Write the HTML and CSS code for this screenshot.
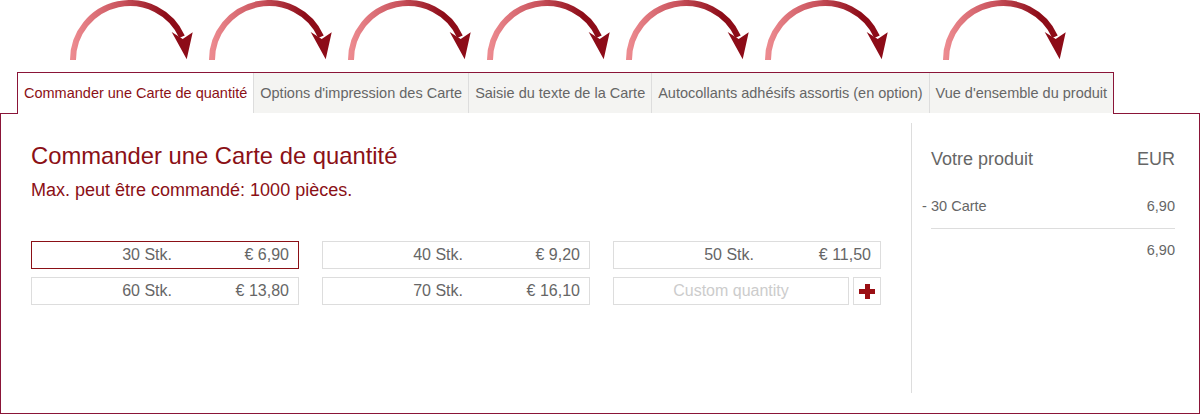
FILE: index.html
```html
<!DOCTYPE html>
<html lang="fr">
<head>
    <meta charset="UTF-8">
    <title>Commander une Carte de quantité</title>
    <link rel="stylesheet" href="styles.css">
</head>
<body>
    <!-- Step arrows -->
    <div class="steps">
        <svg class="step-arrow" viewBox="0 0 130 64"><defs><linearGradient id="arc" x1="0" y1="0" x2="1" y2="0"><stop offset="0" stop-color="#ec8a8f"/><stop offset="0.45" stop-color="#c9525c"/><stop offset="0.85" stop-color="#8d0c18"/></linearGradient></defs><path d="M3 60 A57 57 0 0 1 112 36.7" fill="none" stroke="url(#arc)" stroke-width="6"/><path d="M101.7 32 L112.7 39 L122.7 32.3 L116.7 59.3 Z" fill="#8d0c18"/></svg>
        <svg class="step-arrow" viewBox="0 0 130 64"><path d="M3 60 A57 57 0 0 1 112 36.7" fill="none" stroke="url(#arc)" stroke-width="6"/><path d="M101.7 32 L112.7 39 L122.7 32.3 L116.7 59.3 Z" fill="#8d0c18"/></svg>
        <svg class="step-arrow" viewBox="0 0 130 64"><path d="M3 60 A57 57 0 0 1 112 36.7" fill="none" stroke="url(#arc)" stroke-width="6"/><path d="M101.7 32 L112.7 39 L122.7 32.3 L116.7 59.3 Z" fill="#8d0c18"/></svg>
        <svg class="step-arrow" viewBox="0 0 130 64"><path d="M3 60 A57 57 0 0 1 112 36.7" fill="none" stroke="url(#arc)" stroke-width="6"/><path d="M101.7 32 L112.7 39 L122.7 32.3 L116.7 59.3 Z" fill="#8d0c18"/></svg>
        <svg class="step-arrow" viewBox="0 0 130 64"><path d="M3 60 A57 57 0 0 1 112 36.7" fill="none" stroke="url(#arc)" stroke-width="6"/><path d="M101.7 32 L112.7 39 L122.7 32.3 L116.7 59.3 Z" fill="#8d0c18"/></svg>
        <svg class="step-arrow" viewBox="0 0 130 64"><path d="M3 60 A57 57 0 0 1 112 36.7" fill="none" stroke="url(#arc)" stroke-width="6"/><path d="M101.7 32 L112.7 39 L122.7 32.3 L116.7 59.3 Z" fill="#8d0c18"/></svg>
        <svg class="step-arrow last" viewBox="0 0 130 64"><path d="M3 60 A57 57 0 0 1 112 36.7" fill="none" stroke="url(#arc)" stroke-width="6"/><path d="M101.7 32 L112.7 39 L122.7 32.3 L116.7 59.3 Z" fill="#8d0c18"/></svg>
    </div>

    <!-- Tabs -->
    <div class="tabs">
        <div class="tab active">Commander une Carte de quantité</div>
        <div class="tab">Options d'impression des Carte</div>
        <div class="tab">Saisie du texte de la Carte</div>
        <div class="tab">Autocollants adhésifs assortis (en option)</div>
        <div class="tab">Vue d'ensemble du produit</div>
    </div>

    <div class="panel">
        <div class="main">
            <h1 class="title">Commander une Carte de quantité</h1>
            <p class="max-note">Max. peut être commandé: 1000 pièces.</p>

            <div class="qty-grid">
                <button class="qty selected"><span class="qty-num">30 Stk.</span><span class="qty-price">€ 6,90</span></button>
                <button class="qty"><span class="qty-num">40 Stk.</span><span class="qty-price">€ 9,20</span></button>
                <button class="qty"><span class="qty-num">50 Stk.</span><span class="qty-price">€ 11,50</span></button>
                <button class="qty"><span class="qty-num">60 Stk.</span><span class="qty-price">€ 13,80</span></button>
                <button class="qty"><span class="qty-num">70 Stk.</span><span class="qty-price">€ 16,10</span></button>
                <div class="custom">
                    <input type="text" class="custom-input" placeholder="Custom quantity">
                    <button class="add-button"><span class="plus"></span></button>
                </div>
            </div>
        </div>

        <aside class="summary">
            <div class="summary-head">
                <span>Votre produit</span>
                <span>EUR</span>
            </div>
            <div class="summary-item">
                <span class="item-label">30 Carte</span>
                <span>6,90</span>
            </div>
            <div class="summary-total">6,90</div>
        </aside>
    </div>
</body>
</html>
```

FILE: styles.css
```css
* {
    margin: 0;
    padding: 0;
    box-sizing: border-box;
}

body {
    font-family: 'Liberation Sans', Arial, sans-serif;
    background: #ffffff;
    color: #666666;
}

/* Step arrows */
.steps {
    display: flex;
    gap: 9px;
    height: 72px;
    padding-left: 70px;
}

.step-arrow {
    width: 130px;
    height: 64px;
    display: block;
}

.step-arrow.last {
    margin-left: 39px;
}

/* Tabs */
.tabs {
    display: flex;
    width: max-content;
    margin-left: 17px;
    margin-bottom: -1px;
    padding-bottom: 1px;
    border: 1px solid #8a1538;
    border-bottom: none;
    background: #ffffff;
    position: relative;
    z-index: 1;
}

.tab {
    height: 40px;
    line-height: 40px;
    padding: 0 6px;
    font-size: 14.5px;
    color: #666666;
    background: #f4f4f2;
    border-left: 1px solid #dddddd;
    white-space: nowrap;
}

.tab:first-child {
    border-left: none;
}

.tab.active {
    background: #ffffff;
    color: #8b1016;
}

/* Panel */
.panel {
    display: flex;
    height: 301px;
    border: 1px solid #8a1538;
}

.main {
    width: 910px;
    padding: 28px 30px 0;
}

.title {
    font-size: 23.8px;
    line-height: 28px;
    font-weight: normal;
    color: #8b1016;
}

.max-note {
    margin-top: 10px;
    font-size: 18px;
    line-height: 20px;
    color: #8b1016;
}

.qty-grid {
    display: grid;
    grid-template-columns: 268px 268px 268px;
    column-gap: 23px;
    row-gap: 8px;
    margin-top: 41px;
}

.qty {
    display: flex;
    align-items: center;
    height: 28px;
    border: 1px solid #dddddd;
    background: #ffffff;
    font-family: inherit;
    font-size: 16px;
    color: #666666;
    cursor: pointer;
    padding-right: 9px;
}

.qty.selected {
    border-color: #8b1016;
}

.qty-num {
    width: 140px;
    text-align: right;
}

.qty-price {
    flex: 1;
    text-align: right;
}

.custom {
    display: flex;
    gap: 4px;
}

.custom-input {
    flex: 1;
    min-width: 0;
    height: 28px;
    border: 1px solid #dddddd;
    font-family: inherit;
    font-size: 16px;
    text-align: center;
    color: #666666;
}

.custom-input::placeholder {
    color: #cccccc;
}

.add-button {
    width: 28px;
    height: 28px;
    border: 1px solid #dddddd;
    background: #ffffff;
    display: flex;
    align-items: center;
    justify-content: center;
    cursor: pointer;
}

.plus {
    position: relative;
    width: 16px;
    height: 15px;
}

.plus::before,
.plus::after {
    content: "";
    position: absolute;
    background: #9a0f14;
}

.plus::before {
    left: 0;
    top: 5px;
    width: 16px;
    height: 5px;
}

.plus::after {
    left: 6px;
    top: 0;
    width: 5px;
    height: 15px;
}

/* Summary sidebar */
.summary {
    flex: 1;
    margin: 9px 0 20px;
    padding: 26px 24px 0 19px;
    border-left: 1px solid #dddddd;
}

.summary-head {
    display: flex;
    justify-content: space-between;
    font-size: 18px;
    line-height: 20px;
}

.summary-item {
    display: flex;
    justify-content: space-between;
    margin-top: 28px;
    padding-bottom: 13px;
    border-bottom: 1px solid #dddddd;
    font-size: 14.5px;
    line-height: 18px;
}

.item-label::before {
    content: "-";
    display: inline-block;
    width: 9px;
    margin-left: -9px;
}

.summary-total {
    margin-top: 12px;
    font-size: 14.5px;
    line-height: 18px;
    text-align: right;
}
```
